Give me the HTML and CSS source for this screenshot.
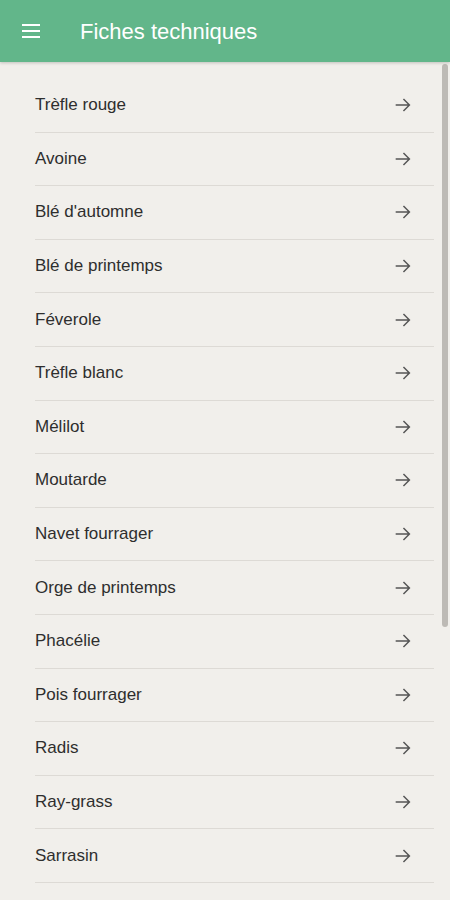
FILE: index.html
```html
<!DOCTYPE html>
<html lang="fr">
<head>
<meta charset="utf-8">
<title>Fiches techniques</title>
<link rel="stylesheet" href="styles.css">
</head>
<body>
<header class="appbar">
  <svg class="menu" width="24" height="24" viewBox="0 0 24 24"><path d="M3 6h18M3 12h18M3 18h18" stroke="#fff" stroke-width="2" fill="none"/></svg>
  <h1 class="title">Fiches techniques</h1>
</header>
<main class="content">
  <ul class="list">
    <li class="row"><span>Trèfle rouge</span><svg class="arrow" viewBox="0 0 24 24"><path d="M4 12h15M12.5 5.5L19 12l-6.5 6.5" /></svg></li>
    <li class="row"><span>Avoine</span><svg class="arrow" viewBox="0 0 24 24"><path d="M4 12h15M12.5 5.5L19 12l-6.5 6.5" /></svg></li>
    <li class="row"><span>Blé d'automne</span><svg class="arrow" viewBox="0 0 24 24"><path d="M4 12h15M12.5 5.5L19 12l-6.5 6.5" /></svg></li>
    <li class="row"><span>Blé de printemps</span><svg class="arrow" viewBox="0 0 24 24"><path d="M4 12h15M12.5 5.5L19 12l-6.5 6.5" /></svg></li>
    <li class="row"><span>Féverole</span><svg class="arrow" viewBox="0 0 24 24"><path d="M4 12h15M12.5 5.5L19 12l-6.5 6.5" /></svg></li>
    <li class="row"><span>Trèfle blanc</span><svg class="arrow" viewBox="0 0 24 24"><path d="M4 12h15M12.5 5.5L19 12l-6.5 6.5" /></svg></li>
    <li class="row"><span>Mélilot</span><svg class="arrow" viewBox="0 0 24 24"><path d="M4 12h15M12.5 5.5L19 12l-6.5 6.5" /></svg></li>
    <li class="row"><span>Moutarde</span><svg class="arrow" viewBox="0 0 24 24"><path d="M4 12h15M12.5 5.5L19 12l-6.5 6.5" /></svg></li>
    <li class="row"><span>Navet fourrager</span><svg class="arrow" viewBox="0 0 24 24"><path d="M4 12h15M12.5 5.5L19 12l-6.5 6.5" /></svg></li>
    <li class="row"><span>Orge de printemps</span><svg class="arrow" viewBox="0 0 24 24"><path d="M4 12h15M12.5 5.5L19 12l-6.5 6.5" /></svg></li>
    <li class="row"><span>Phacélie</span><svg class="arrow" viewBox="0 0 24 24"><path d="M4 12h15M12.5 5.5L19 12l-6.5 6.5" /></svg></li>
    <li class="row"><span>Pois fourrager</span><svg class="arrow" viewBox="0 0 24 24"><path d="M4 12h15M12.5 5.5L19 12l-6.5 6.5" /></svg></li>
    <li class="row"><span>Radis</span><svg class="arrow" viewBox="0 0 24 24"><path d="M4 12h15M12.5 5.5L19 12l-6.5 6.5" /></svg></li>
    <li class="row"><span>Ray-grass</span><svg class="arrow" viewBox="0 0 24 24"><path d="M4 12h15M12.5 5.5L19 12l-6.5 6.5" /></svg></li>
    <li class="row"><span>Sarrasin</span><svg class="arrow" viewBox="0 0 24 24"><path d="M4 12h15M12.5 5.5L19 12l-6.5 6.5" /></svg></li>
    <li class="row"><span>Seigle</span><svg class="arrow" viewBox="0 0 24 24"><path d="M4 12h15M12.5 5.5L19 12l-6.5 6.5" /></svg></li>
  </ul>
  <div class="scrollbar"></div>
</main>
</body>
</html>
```
FILE: styles.css
```css
* { box-sizing: border-box; }
html, body {
  margin: 0;
  padding: 0;
  height: 900px;
  overflow: hidden;
  background: #f1efeb;
  font-family: "Liberation Sans", Arial, sans-serif;
}
.appbar {
  height: 62px;
  background: #62b68a;
  display: flex;
  align-items: center;
  padding-left: 19px;
  box-shadow: 0 1px 3px rgba(0,0,0,0.2);
  position: relative;
  z-index: 2;
}
.menu { display: block; }
.title {
  margin: 2px 0 0 37px;
  font-size: 22px;
  font-weight: 400;
  color: #ffffff;
}
.content {
  position: relative;
  height: 838px;
  padding: 17px 16px 0 35px;
}
.list {
  list-style: none;
  margin: 0;
  padding: 0;
}
.row {
  height: 53.6px;
  display: flex;
  align-items: center;
  justify-content: space-between;
  border-bottom: 1px solid #dddad5;
  padding-right: 20px;
  font-size: 17px;
  color: #2e2e2e;
}
.arrow {
  width: 22px;
  height: 22px;
  fill: none;
  stroke: #555555;
  stroke-width: 1.6;
}
.scrollbar {
  position: absolute;
  top: 2px;
  right: 2px;
  width: 6px;
  height: 563px;
  background: #bdbab5;
  border-radius: 3px;
}
```
